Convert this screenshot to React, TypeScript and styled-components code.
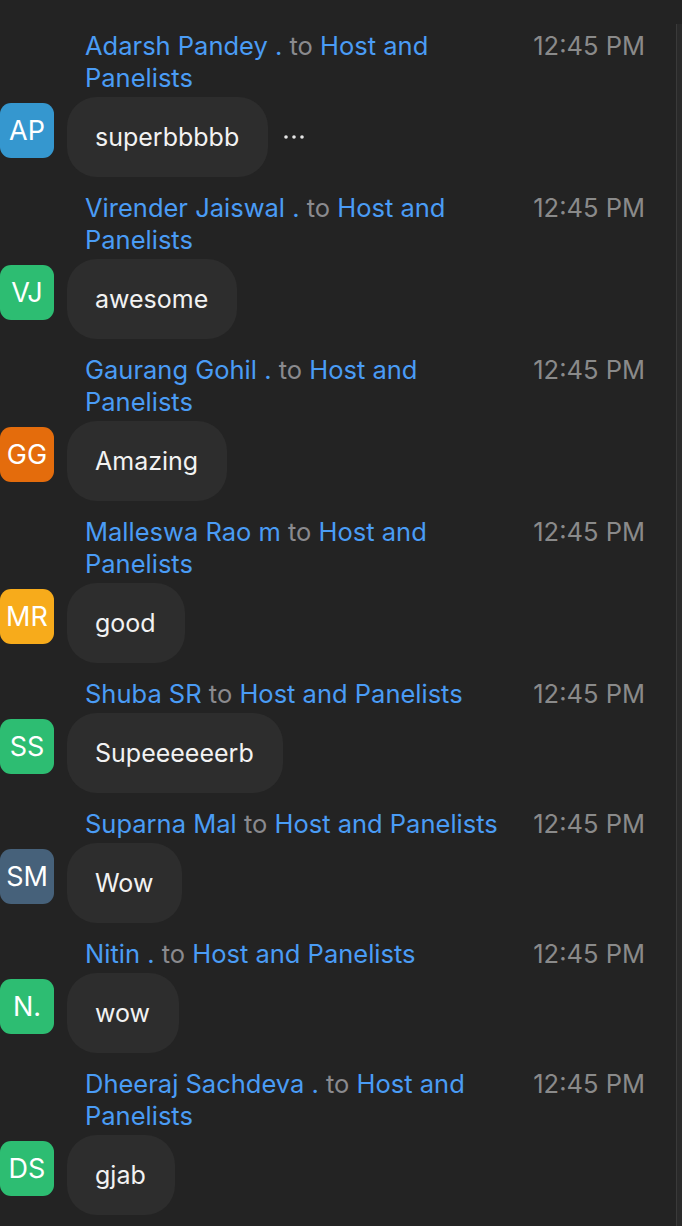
import React from 'react'
import styled, { createGlobalStyle } from 'styled-components'

const GlobalStyle = createGlobalStyle`
    html, body {
        margin: 0;
        padding: 0;
        background: #232323;
    }
    body {
        font-family: Inter, "Noto Sans", sans-serif;
        -webkit-font-smoothing: antialiased;
    }
`

type Message = {
    initials: string
    color: string
    name: string
    text: string
    time: string
    menu?: boolean
}

const messages: Message[] = [
    { initials: 'AP', color: '#3597cf', name: 'Adarsh Pandey .', text: 'superbbbbb', time: '12:45 PM', menu: true },
    { initials: 'VJ', color: '#2dbd72', name: 'Virender Jaiswal .', text: 'awesome', time: '12:45 PM' },
    { initials: 'GG', color: '#e46c0c', name: 'Gaurang Gohil .', text: 'Amazing', time: '12:45 PM' },
    { initials: 'MR', color: '#f7ab1b', name: 'Malleswa Rao m', text: 'good', time: '12:45 PM' },
    { initials: 'SS', color: '#2dbd72', name: 'Shuba SR', text: 'Supeeeeeerb', time: '12:45 PM' },
    { initials: 'SM', color: '#46617a', name: 'Suparna Mal', text: 'Wow', time: '12:45 PM' },
    { initials: 'N.', color: '#2dbd72', name: 'Nitin .', text: 'wow', time: '12:45 PM' },
    { initials: 'DS', color: '#2dbd72', name: 'Dheeraj Sachdeva .', text: 'gjab', time: '12:45 PM' },
]

const Panel = styled.div`
    position: relative;
    min-height: 1226px;
    padding: 30px 0 0 0;
    box-sizing: border-box;
    background: #232323;
`

const ScrollTrack = styled.div`
    position: absolute;
    top: 24px;
    right: 0;
    bottom: 0;
    width: 5px;
    background: #2a2a2a;
    border-left: 1px solid #3a3a3a;
`

const Item = styled.div`
    display: flex;
    flex-direction: column;
    padding-bottom: 15px;
`

const Header = styled.div`
    display: flex;
    align-items: flex-start;
    padding: 0 37px 0 85px;
    font-size: 25.5px;
    line-height: 32px;
`

const Sender = styled.p`
    flex: 1;
    margin: 0;
    color: #4a9cf5;
    padding-right: 22px;
`

const To = styled.span`
    color: #8a8a8e;
`

const Time = styled.div`
    color: #8a8a8a;
    white-space: nowrap;
`

const Body = styled.div`
    display: flex;
    align-items: flex-start;
    margin-top: 3px;
`

const Avatar = styled.div<{ $bg: string }>`
    width: 54px;
    height: 55px;
    margin-top: 6px;
    border-radius: 11px;
    background: ${(p) => p.$bg};
    color: #ffffff;
    font-size: 27px;
    display: flex;
    align-items: center;
    justify-content: center;
    flex-shrink: 0;
`

const Bubble = styled.div`
    margin-left: 13px;
    height: 80px;
    padding: 0 29px 0 28px;
    border-radius: 30px;
    background: #2d2d2d;
    color: #f2f2f2;
    font-size: 25px;
    display: flex;
    align-items: center;
`

const More = styled.div`
    height: 80px;
    margin-left: 15px;
    display: flex;
    align-items: center;
`

const Dots = () => (
    <svg width='24' height='6' viewBox='0 0 24 6'>
        <circle cx='3' cy='3' r='1.8' fill='#e6e6e6' />
        <circle cx='11' cy='3' r='1.8' fill='#e6e6e6' />
        <circle cx='19' cy='3' r='1.8' fill='#e6e6e6' />
    </svg>
)

const App = () => {
    return (
        <Panel>
            <GlobalStyle />
            <ScrollTrack />
            {
                messages.map((m, index) => (
                    <Item key={index}>
                        <Header>
                            <Sender>
                                {m.name} <To>to</To> Host and Panelists
                            </Sender>
                            <Time>{m.time}</Time>
                        </Header>
                        <Body>
                            <Avatar $bg={m.color}>{m.initials}</Avatar>
                            <Bubble>{m.text}</Bubble>
                            {m.menu && <More><Dots /></More>}
                        </Body>
                    </Item>
                ))
            }
        </Panel>
    )
}

export default App
